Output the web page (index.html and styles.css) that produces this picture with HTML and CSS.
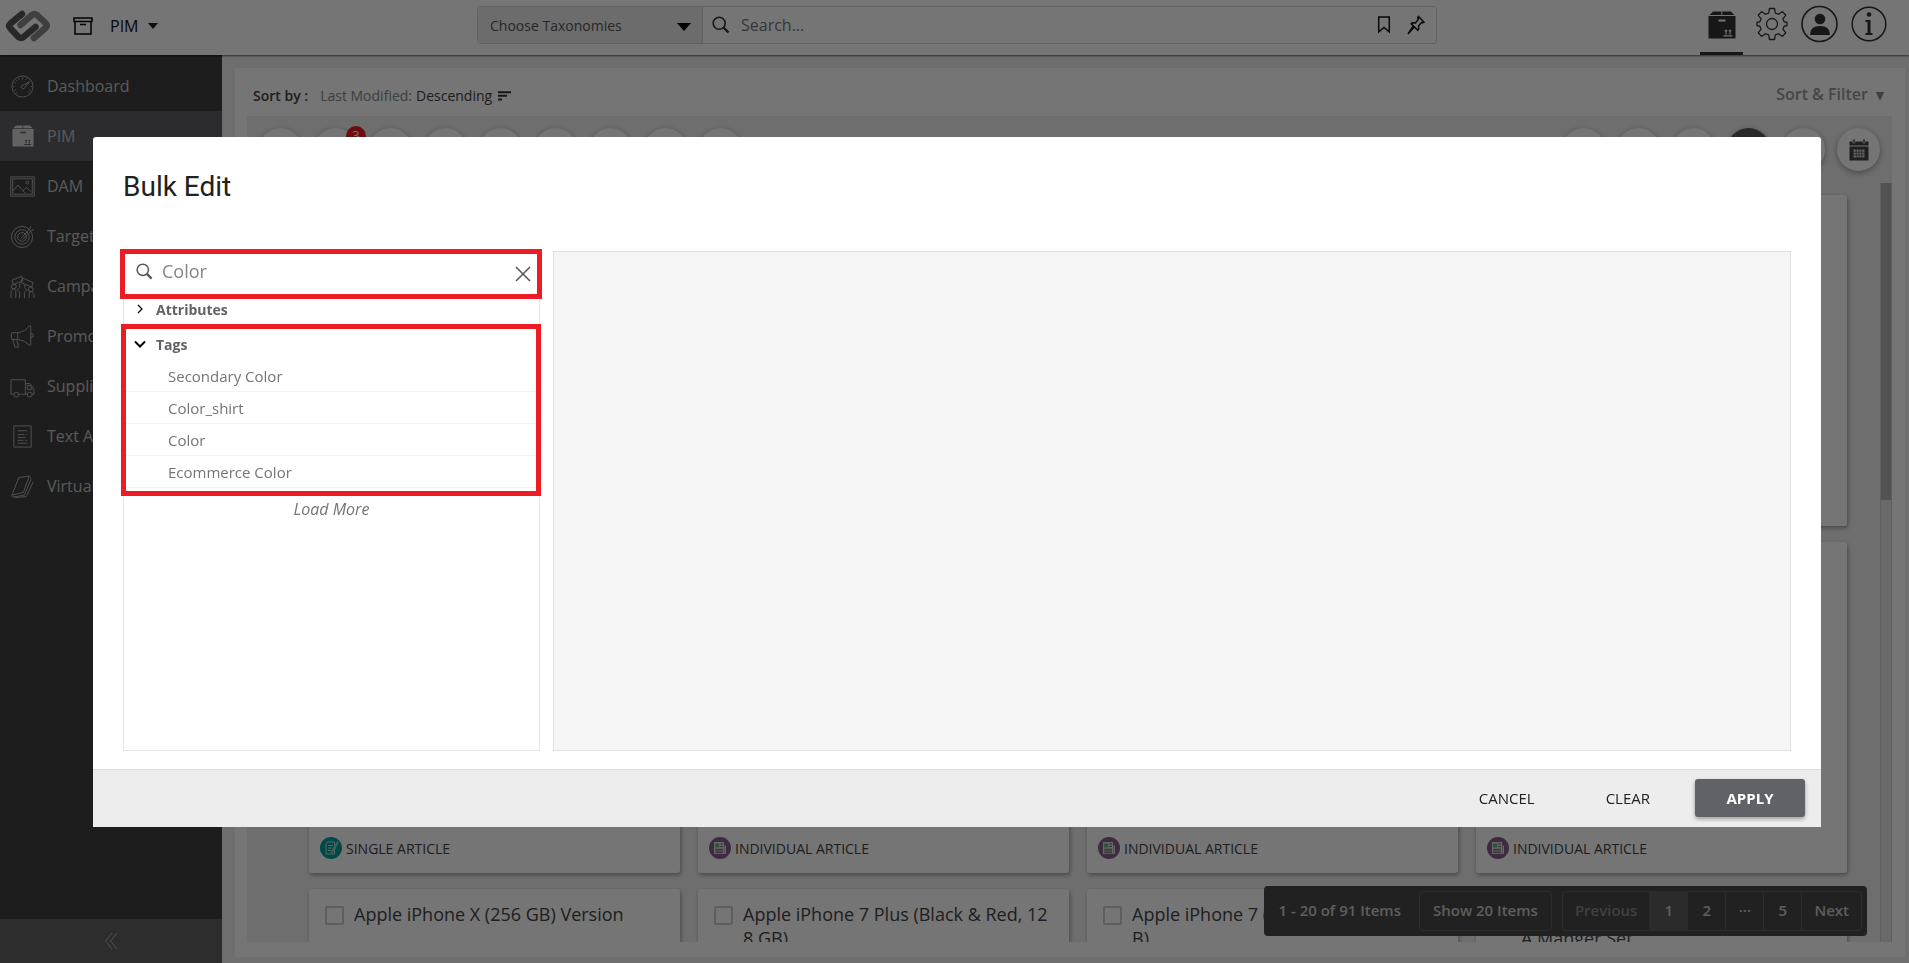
FILE: index.html
```html
<!DOCTYPE html>
<html lang="en">
<head>
<meta charset="utf-8">
<title>PIM - Bulk Edit</title>
<link rel="stylesheet" href="styles.css">
</head>
<body>
<svg width="0" height="0" class="defs" aria-hidden="true">
  <defs>
    <symbol id="search" viewBox="0 0 18 18"><circle cx="7.2" cy="7.2" r="6" fill="none" stroke="currentColor" stroke-width="1.6"/><path d="M11.5 11.5 16.5 16.5" stroke="currentColor" stroke-width="2.4" fill="none"/></symbol>
    <symbol id="box" viewBox="0 0 28 28"><path d="M5 .5h8.3v3.6H1.500zM14.300.5h8.500l3.700 3.600H14.300z" fill="currentColor"/><path fill-rule="evenodd" d="M.5 5h27v22.500H.5zM10.500 8.500h7v2h-7zM15.500 24.300h9v1.200h-9zM17.400 20.300h1.200v3.200h-1.200zM21.400 20.300h1.200v3.200h-1.200zM16.200 20.300l1.800-2 1.800 2zM20.200 20.300l1.800-2 1.800 2z" fill="currentColor"/></symbol>
    <symbol id="news" viewBox="0 0 22 22"><circle cx="11" cy="11" r="11" fill="#85608a"/><path d="M5 5h10v12H5z" fill="#e2e2e2"/><path d="M15.500 8.500h1.500V16a1 1 0 0 1-1.500 1z" fill="#e2e2e2"/><path d="M6.200 6.500h4v4h-4z" fill="#5fae86"/><path d="M11.300 7h2.700M11.300 9.500h2.700M6.200 12.300h7.800M6.200 14h7.800M6.200 15.700h7.800" stroke="#666" stroke-width="1"/></symbol>
  </defs>
</svg>

<div class="app">
  <header class="topbar">
    <div class="brand">
      <svg class="logo" viewBox="0 0 46 32" aria-label="Logo"><g fill="none" stroke-width="6.500" stroke-linecap="round" stroke-linejoin="round"><path d="M29 28 40.500 18q2.500-2.500 0-5L32 5q-2.500-2-5 0L15.500 15" stroke="#8a8a8c"/><path d="M17 4 5.500 13.500q-2.500 2.500 0 5L13.500 27q2.500 2 5 0L30.500 17" stroke="#58585a"/></g></svg>
      <svg class="archive" viewBox="0 0 20 18"><path d="M1 1h18v3.600H1zM2 4.600V17h16V4.600M7 7.500h6" fill="none" stroke="#000" stroke-width="1.500"/></svg>
      <button class="module" type="button">PIM <svg viewBox="0 0 10 6"><path d="M0 0h10L5 6z"/></svg></button>
    </div>
    <div class="finder">
      <label class="taxonomy"><select aria-label="Taxonomies"><option>Choose Taxonomies</option></select><svg viewBox="0 0 14 8"><path d="M0 0h14L7 8z"/></svg></label>
      <label class="search"><svg><use href="#search"/></svg><input type="search" placeholder="Search..." aria-label="Search"></label>
      <button type="button" aria-label="Bookmark"><svg width="14" height="18" viewBox="0 0 14 18"><path d="M1.700 1h10.600v15L7 11.500 1.700 16z"/></svg></button>
      <button type="button" aria-label="Pin"><svg width="18" height="20" viewBox="0 0 18 20"><path d="M11.500 1.500l5.500 5.700-1.700.6-.8-.2-3 3.400.2 3.200-1 1L4.200 8.700l1-.9 3.200.2L11.300 4.400l-.6-1.600zM7 12.200 1 19l5-7.500"/></svg></button>
    </div>
    <nav class="tools" aria-label="Account">
      <a class="on" href="#" aria-label="Products"><svg width="28" height="28"><use href="#box"/></svg></a>
      <a href="#" aria-label="Settings"><svg width="32" height="34" viewBox="-16 -17 32 34"><path d="M-2.500-15.500h5l.8 4.500 3.200 1.300 3.800-2.800 3.400 3.500-2.700 3.900 1.300 3.100 2.700.4v3.200l-2.700.4-1.300 3.100 2.700 3.900-3.400 3.500-3.800-2.800-3.200 1.300-.8 4.500h-5l-.8-4.500-3.200-1.300-3.800 2.800-3.400-3.500 2.700-3.900-1.300-3.100-2.700-.4v-3.200l2.700-.4 1.300-3.100-2.700-3.900 3.400-3.500 3.800 2.800 3.200-1.300z" fill="none" stroke="#333" stroke-width="1.300"/><circle r="5.500" fill="none" stroke="#333" stroke-width="1.300"/></svg></a>
      <a href="#" aria-label="Profile"><svg width="37" height="38" viewBox="0 0 37 38"><circle cx="18.500" cy="19" r="17.500" fill="none" stroke="#333" stroke-width="1.600"/><circle cx="19" cy="14" r="5.300" fill="#333"/><path d="M9 30q0-9 10-9t10 9z" fill="#333"/></svg></a>
      <a href="#" aria-label="Information"><svg width="36" height="38" viewBox="0 0 36 38"><circle cx="18" cy="19" r="16.800" fill="none" stroke="#333" stroke-width="1.500"/><circle cx="18" cy="9.500" r="2.300" fill="#333"/><path d="M14.500 15h5v13h2v2h-7v-2h2V17h-2z" fill="#333"/></svg></a>
    </nav>
  </header>

  <div class="body">
    <aside class="sidebar">
      <nav>
        <a href="#"><svg viewBox="0 0 26 26"><circle cx="13" cy="13" r="11"/><path d="M13 3.500v2M4.500 13h-1.500M23 13h-1.500M6.500 6.500l1 1M6.500 19.500l1-1M19.500 19.500l-1-1M9 4.500l.5 1.500M17 4.500l-.5 1.500M4.500 9l1.500.5M4.500 17l1.500-.5M21.500 17l-1.500-.5M20.500 8l-6.500 3.500a2 2 0 1 0 1.500 2.500z"/></svg>Dashboard</a>
        <a class="on" href="#"><svg class="solid"><use href="#box"/></svg>PIM</a>
        <a href="#"><svg viewBox="0 0 26 26"><path d="M.8 3h24.400v20H.8zM2.800 5h20.400v16H2.800zM3 17.500l5.500-6 5 6 3.500-3.500 5 4.500M13.500 17.500l2 2"/><circle cx="18" cy="9" r="1.500"/></svg>DAM</a>
        <a href="#"><svg viewBox="0 0 26 26"><circle cx="12.500" cy="13.500" r="11"/><circle cx="12.500" cy="13.500" r="7.500"/><circle cx="12.500" cy="13.500" r="4.500"/><path d="M11.500 14.500 21 5M13 16 22.500 6.500M21 5l.5-2.500M22.500 6.500l2.500-.5"/></svg>Target</a>
        <a href="#"><svg viewBox="0 0 26 26"><path d="M1 25v-7l3-3 2 3v7M20 25v-5l2-2 3 3v4M2 6.500l10-4 1.500 4.500-10 4zM13 4l11 5-1.500 4.500-11-4.500zM7 17l3-3v-4M10 25v-6l-2-2M18 17l-3-3 1-3M15 25v-6l2-2"/><circle cx="4" cy="13" r="2.500"/><circle cx="21.500" cy="16" r="2.500"/></svg>Campaign</a>
        <a href="#"><svg viewBox="0 0 26 26"><path d="M2 9h6v7H2q-1.500-3.500 0-7zM8 9q8-1 12-7h1.500v20H20q-4-5-12-6M3 16l2 8h4l-2-8M21.500 10q3 0 3 2t-3 2"/></svg>Promotions</a>
        <a href="#"><svg viewBox="0 0 26 26"><path d="M4 21H1V6h15v15H9M16 10h5l4 6v5h-2M18 21h-2M18 12h3l2 4h-5z"/><circle cx="6.500" cy="21.500" r="2.500"/><circle cx="20.500" cy="21.500" r="2.500"/></svg>Suppliers</a>
        <a href="#"><svg viewBox="0 0 26 26"><path d="M4 2h18v22H4zM8 7h10M8 11h7M17 11h1M8 14h8M8 17h6M16 17h2M8 20h10"/></svg>Text Analysis</a>
        <a href="#"><svg viewBox="0 0 26 26"><path d="M9 4l11-2-6 17-12 3zM2 22l1 2 12-2 7-17M5 24.500l12-1 7-15M20 2l2 2"/></svg>Virtual Catalog</a>
      </nav>
      <button class="collapse" type="button" aria-label="Collapse menu"><svg width="14" height="18" viewBox="0 0 14 18"><path d="M8 1 1.500 9 8 17M13 1 6.500 9l6.500 8"/></svg></button>
    </aside>

    <main class="content">
      <section class="panel">
        <div class="sortbar">
          <b>Sort by :</b><span class="key">Last Modified:</span><span>Descending</span>
          <svg width="14" height="10" viewBox="0 0 14 10"><path d="M0 1.200h13M0 4.800h9M0 8.500h4" stroke="#333" stroke-width="2"/></svg>
          <button type="button">Sort &amp; Filter <svg width="8" height="9" viewBox="0 0 8 9"><path d="M0 0h8L4 9z" fill="#8c8c8c"/></svg></button>
        </div>
        <div class="board">
          <div class="actions">
            <button type="button" aria-label="Action"></button>
            <button type="button" aria-label="Selection"><span class="badge">3</span></button>
            <button type="button" aria-label="Action"></button>
            <button type="button" aria-label="Action"></button>
            <button type="button" aria-label="Action"></button>
            <button type="button" aria-label="Action"></button>
            <button type="button" aria-label="Action"></button>
            <button type="button" aria-label="Action"></button>
            <button type="button" aria-label="Action"></button>
            <button class="split" type="button" aria-label="View"></button>
            <button type="button" aria-label="View"></button>
            <button type="button" aria-label="View"></button>
            <button class="dark" type="button" aria-label="View"></button>
            <button type="button" aria-label="View"></button>
            <button type="button" aria-label="Calendar"><svg width="20" height="22" viewBox="0 0 20 22"><path d="M.5 2.500h19v4H.5zM.5 7.500h19v14H.5z" fill="#444"/><path d="M4 0h2v4H4zM14 0h2v4h-2z" fill="#444" stroke="#fff" stroke-width=".6"/><path d="M4.500 10.500h11v8h-11z" fill="#ddd"/><path d="M7.300 10v9M10 10v9M12.700 10v9M4 13.200h12M4 15.900h12" stroke="#444" stroke-width=".7"/></svg></button>
          </div>
          <div class="scroller">
            <div class="cards">
              <article></article><article></article><article></article><article></article>
              <article><p><svg viewBox="0 0 22 22"><circle cx="11" cy="11" r="11" fill="#00a096"/><path d="M6 6.500 8 5h6.500v12H6zM8 8.500h5M8 11h4M8 13.500h3M17.500 4.500 12 14l-.5 2 1.500-1.500 5.500-9z" fill="none" stroke="#b9dedb" stroke-width="1"/></svg>SINGLE ARTICLE</p></article>
              <article><p><svg><use href="#news"/></svg>INDIVIDUAL ARTICLE</p></article>
              <article><p><svg><use href="#news"/></svg>INDIVIDUAL ARTICLE</p></article>
              <article><p><svg><use href="#news"/></svg>INDIVIDUAL ARTICLE</p></article>
              <article><label><input type="checkbox"><span>Apple iPhone X (256 GB) Version</span></label></article>
              <article><label><input type="checkbox"><span>Apple iPhone 7 Plus (Black &amp; Red, 12<br>8 GB)</span></label></article>
              <article><label><input type="checkbox"><span>Apple iPhone 7 (<br>B)</span></label></article>
              <article><label><input type="checkbox"><span><br>A Manger Set</span></label></article>
            </div>
            <div class="track"><div class="thumb"></div></div>
          </div>
        </div>
      </section>
      <div class="pager">
        <span class="count">1 - 20 of 91 Items</span>
        <button class="size" type="button">Show 20 Items</button>
        <div class="pages">
          <button type="button" disabled>Previous</button><button class="on" type="button">1</button><button type="button">2</button><button type="button">···</button><button type="button">5</button><button type="button">Next</button>
        </div>
      </div>
    </main>
  </div>
</div>

<div class="overlay">
  <div class="dialog" role="dialog" aria-modal="true" aria-labelledby="dialog-title">
    <h1 id="dialog-title">Bulk Edit</h1>
    <div class="columns">
      <div class="picker">
        <div class="field">
          <svg width="17" height="17"><use href="#search"/></svg>
          <input type="text" value="Color" aria-label="Search attributes and tags">
          <button type="button" aria-label="Clear search"><svg width="16" height="16" viewBox="0 0 16 16"><path d="M1 1l14 14M15 1 1 15"/></svg></button>
        </div>
        <button class="group closed" type="button"><svg width="12" height="12" viewBox="0 0 12 12"><path d="M4 2l4 4-4 4"/></svg>Attributes</button>
        <div class="tags">
          <button class="group" type="button"><svg width="12" height="12" viewBox="0 0 12 12"><path d="M1 3.500l5 5 5-5"/></svg>Tags</button>
          <ul>
            <li>Secondary Color</li>
            <li>Color_shirt</li>
            <li>Color</li>
            <li>Ecommerce Color</li>
          </ul>
        </div>
        <button class="more" type="button">Load More</button>
      </div>
      <div class="canvas"></div>
    </div>
    <footer>
      <button type="button">CANCEL</button>
      <button type="button">CLEAR</button>
      <button class="apply" type="button">APPLY</button>
    </footer>
  </div>
</div>
</body>
</html>
```
FILE: styles.css
```css
* { box-sizing: border-box; }
body { margin: 0; font-family: "Open Sans", "Noto Sans", sans-serif; font-size: 14px; color: #444; }
button, input, select { font: inherit; color: inherit; border: 0; background: none; padding: 0; margin: 0; outline: 0; }
a { color: inherit; text-decoration: none; }
svg { flex: none; display: block; }
.defs { position: absolute; }

.app { height: 100vh; display: flex; flex-direction: column; overflow: hidden; background: #f0f0f0; }

.topbar { position: relative; flex: none; height: 55px; display: grid; grid-template-columns: 1fr minmax(0, 960px) 1fr; padding-left: 5px; background: #fff; box-shadow: 0 1px 2px rgba(0, 0, 0, .6); z-index: 1; }
.brand { display: flex; align-items: center; padding-bottom: 4px; }
.logo { width: 46px; height: 32px; }
.archive { width: 20px; height: 18px; margin: 0 17px 0 22px; }
.module { display: flex; align-items: center; gap: 10px; font-size: 16px; color: #111; }
.module svg { width: 10px; height: 6px; fill: #222; }
.finder { display: flex; align-items: center; height: 38px; margin-top: 6px; border: 1px solid #d8d8d8; border-radius: 3px; padding-right: 11px; gap: 16px; }
.finder button svg { fill: none; stroke: #111; stroke-width: 1.5; }
.taxonomy { position: relative; width: 225px; height: 100%; background: #ebebeb; border-right: 1px solid #d8d8d8; }
.taxonomy select { appearance: none; width: 100%; height: 100%; padding-left: 12px; font-weight: 500; color: #555; }
.taxonomy svg { position: absolute; right: 11px; top: 16px; width: 14px; height: 8px; pointer-events: none; }
.search { flex: 1; display: flex; align-items: center; gap: 11px; color: #333; margin-left: -7px; }
.search svg { width: 18px; height: 18px; }
.search input { flex: 1; font-size: 16px; }
.search input::placeholder { color: #777; opacity: 1; }
.tools { display: flex; justify-content: flex-end; padding: 0 22px 0 0; gap: 13px; }
.tools a { display: flex; align-items: center; padding-bottom: 8px; }
.tools .on { width: 43px; justify-content: center; padding: 0 0 3px; border-bottom: 3px solid #333; color: #333; }

.body { flex: 1; min-height: 0; display: flex; }
.sidebar { flex: none; width: 222px; display: flex; flex-direction: column; justify-content: space-between; background: #414141; color: #c4c4c4; overflow: hidden; }
.sidebar nav { padding-top: 6px; }
.sidebar a { display: flex; align-items: center; gap: 12px; height: 50px; padding-left: 10px; font-size: 16px; white-space: nowrap; }
.sidebar a.on { background: #606064; }
.sidebar a svg { width: 25px; height: 25px; fill: none; stroke: #b0b0b0; }
.sidebar a svg.solid { width: 22px; height: 22px; margin: 0 1px 0 2px; color: #d5d5d5; stroke: none; }
.collapse { height: 44px; display: grid; place-items: center; background: #626262; }
.collapse svg { fill: none; stroke: #b0b0b0; }

.content { flex: 1; min-width: 0; position: relative; padding: 13px 4px 6px 13px; display: flex; }
.panel { flex: 1; min-width: 0; display: flex; flex-direction: column; padding: 0 13px 15px 12px; background: #fff; }
.sortbar { flex: none; height: 48px; display: flex; align-items: center; padding: 6px 8px 0 6px; }
.sortbar b { margin-right: 12px; font-weight: 600; }
.sortbar .key { margin-right: 4px; color: #888; }
.sortbar > svg { margin: 2px 0 0 6px; }
.sortbar button { display: flex; align-items: center; gap: 8px; margin-left: auto; font-size: 16px; font-weight: 600; color: #999; padding-bottom: 2px; }
.sortbar button svg { margin-top: 4px; }
.board { flex: 1; min-height: 0; display: flex; flex-direction: column; background: #f0f0f0; }
.actions { flex: none; display: flex; gap: 12px; padding: 12px; }
.actions button { position: relative; flex: none; width: 43px; height: 43px; display: grid; place-items: center; border-radius: 50%; background: #fff; box-shadow: 0 2px 6px rgba(0, 0, 0, .35); }
.actions .split { margin-left: auto; }
.actions .dark { background: #5a5a5d; }
.badge { position: absolute; top: -2px; right: -9px; width: 20px; height: 20px; border-radius: 50%; background: #ed1c24; color: #fff; font-size: 13px; line-height: 18px; text-align: center; }
.scroller { flex: 1; min-height: 0; display: flex; overflow: hidden; }
.cards { flex: 1; display: grid; grid-template-columns: repeat(4, 1fr); grid-auto-rows: 331px; gap: 16px 18px; padding: 12px 33px 0 62px; }
.cards article { display: flex; flex-direction: column; justify-content: space-between; border-radius: 3px; background: #fff; box-shadow: 1px 2px 4px rgba(0, 0, 0, .35); }
.cards p { display: flex; align-items: center; gap: 4px; margin: auto 0 0; padding: 0 11px 14px; }
.cards p svg { width: 22px; height: 22px; }
.cards label { display: flex; gap: 10px; padding: 13px 16px; font-size: 18px; line-height: 24px; color: #444; }
.cards input { appearance: none; flex: none; width: 19px; height: 19px; margin-top: 4px; border: 2px solid #ccc; border-radius: 2px; }
.track { width: 12px; background: #e4e4e4; border: solid #d0d0d0; border-width: 0 1px; }
.thumb { height: 317px; background: #b4b4b4; }

.pager { position: absolute; right: 42px; bottom: 27px; height: 50px; display: flex; align-items: center; padding: 0 5px 0 14px; border-radius: 4px; background: #484848; color: #ccc; font-size: 15px; font-weight: 600; }
.pager button { padding-bottom: 2px; }
.count { margin-right: 18px; padding-bottom: 2px; }
.size, .pages { height: 40px; border: 1px solid #606060; border-radius: 4px; }
.pager .size { padding: 0 13px 2px; margin-right: 10px; }
.pages { display: flex; }
.pager .pages button { min-width: 38px; padding: 0 12px 2px; border-right: 1px solid #606060; }
.pager .pages button:last-child { border: 0; }
.pages button:disabled { color: #8c8c8c; }
.pages .on { background: #5e5e5e; }

.overlay { position: fixed; inset: 0; z-index: 2; padding: 137px 88px 136px 93px; background: rgba(0, 0, 0, .54); display: flex; }
.dialog { flex: 1; min-width: 0; display: flex; flex-direction: column; border-radius: 3px 3px 0 0; background: #fff; }
.dialog h1 { margin: 0; padding: 32px 30px 0; height: 114px; font-family: Roboto, sans-serif; font-size: 28px; line-height: 36px; font-weight: 400; color: #212121; }
.columns { flex: 1; min-height: 0; display: flex; gap: 13px; padding: 0 30px; margin-bottom: 18px; }
.picker { flex: none; width: 417px; display: flex; flex-direction: column; border: 1px solid #e4e4e4; color: #757575; }
.canvas { flex: 1; border: 1px solid #e0e0e0; background: #f5f5f5; }
.field { position: relative; height: 45px; display: flex; align-items: center; padding: 0 8px 6px 12px; color: #555; }
.field::after, .tags::after { content: ""; position: absolute; border: 5px solid #ed1c24; pointer-events: none; }
.field::after { inset: -3px -3px -2px -4px; }
.field input { flex: 1; min-width: 0; margin: 0 0 2px 9px; font-size: 18px; color: #858585; }
.field button { padding-top: 4px; }
.field button svg { fill: none; stroke: #555; stroke-width: 1.5; }
.group { display: flex; align-items: center; gap: 10px; height: 30px; padding-left: 10px; font-weight: 700; font-size: 14px; color: #616265; }
.group svg { fill: none; stroke: #000; stroke-width: 2; }
.closed { height: 24px; }
.closed svg { stroke-width: 1.2; }
.tags { position: relative; padding: 5px 0; margin-top: 3px; }
.tags::after { inset: 0 -2px 0 -3px; }
.tags ul { list-style: none; margin: 0; padding: 1px 0 3px; }
.tags li { height: 32px; padding-left: 44px; line-height: 32px; font-size: 15px; border-bottom: 1px solid #f2f2f2; }
.more { align-self: center; margin-top: 2px; font-size: 16px; font-style: italic; }
.dialog footer { flex: none; height: 58px; display: flex; align-items: center; justify-content: flex-end; padding: 0 16px 2px 0; border-top: 1px solid #dcdcdc; background: #ededed; color: #212121; }
.dialog footer button { height: 38px; margin-right: 45px; padding: 0 13px; font-size: 15px; }
.dialog footer button:nth-child(2) { margin-right: 32px; }
.dialog footer .apply { width: 110px; margin: 0; border-radius: 3px; background: #616267; color: #fff; font-weight: 700; box-shadow: 0 2px 4px rgba(0, 0, 0, .35); }
```
